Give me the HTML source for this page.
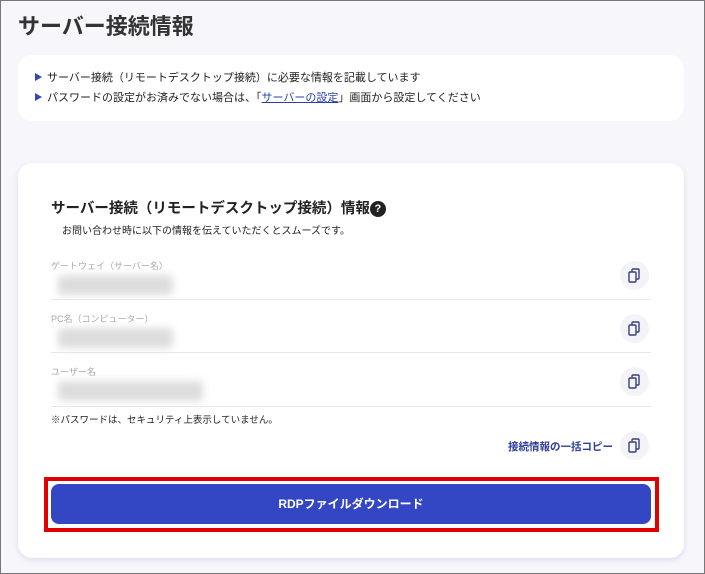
<!DOCTYPE html><html><head><meta charset="utf-8"><style>
*{box-sizing:border-box;margin:0;padding:0}
body{width:705px;height:574px;background:#f6f6fb;box-shadow:inset 0 0 0 1px #777;font-family:"Liberation Sans","Noto Sans CJK JP",sans-serif;color:#222;position:relative;overflow:hidden}
.a{position:absolute}
h1{position:absolute;left:18px;top:9px;font-size:22px;font-weight:bold;color:#333}
.card{position:absolute;left:18px;width:666px;background:#fff;border-radius:14px}
.li{position:absolute;left:17px;font-size:11px;color:#222;white-space:nowrap}
.li:before{content:"";display:inline-block;border-left:7px solid #3345c0;border-top:4px solid transparent;border-bottom:4px solid transparent;margin-right:5px}
.lbl{position:absolute;left:51px;font-size:9px;color:#aaa}
.blur{position:absolute;left:58px;height:20px;background:#ddd;filter:blur(4px);border-radius:4px}
.hr{position:absolute;left:51px;width:600px;height:1px;background:#e6e6ea}
.ic{position:absolute;left:620px;width:29px;height:29px;border-radius:50%;background:#f3f3f8}
.ic svg{position:absolute;left:8px;top:7px}
</style></head><body>
<h1>サーバー接続情報</h1>
<div class="card" style="top:55px;height:66px">
<div class="li" style="top:14px">サーバー接続（リモートデスクトップ接続）に必要な情報を記載しています</div>
<div class="li" style="top:34px">パスワードの設定がお済みでない場合は、「<span style="color:#2a3fa8;text-decoration:underline">サーバーの設定</span>」画面から設定してください</div>
</div>
<div class="card" style="top:163px;height:395px;box-shadow:0 2px 6px rgba(80,80,160,.15)"></div>
<div class="a" style="left:51px;top:197px;font-size:14.5px;font-weight:bold;color:#222;white-space:nowrap">サーバー接続（リモートデスクトップ接続）情報<span style="display:inline-block;width:16px;height:16px;border-radius:50%;background:#222;color:#fff;font-size:11px;text-align:center;line-height:16px;vertical-align:1px">?</span></div>
<div class="a" style="left:62px;top:222px;font-size:10px">お問い合わせ時に以下の情報を伝えていただくとスムーズです。</div>
<div class="lbl" style="top:259px">ゲートウェイ（サーバー名）</div><div class="blur" style="top:275px;width:115px"></div><div class="hr" style="top:299px"></div>
<div class="lbl" style="top:312px">PC名（コンピューター）</div><div class="blur" style="top:328px;width:115px"></div><div class="hr" style="top:352px"></div>
<div class="lbl" style="top:365px">ユーザー名</div><div class="blur" style="top:381px;width:145px"></div><div class="hr" style="top:406px"></div>
<div class="a" style="left:51px;top:412px;font-size:9.5px">※パスワードは、セキュリティ上表示していません。</div>
<div class="a" style="left:508px;top:439px;font-size:10.5px;font-weight:bold;color:#2f3f9a">接続情報の一括コピー</div>
<div class="ic" style="top:261px"><svg width="13" height="15" viewBox="0 0 13 15" fill="none" stroke="#3a3f7a" stroke-width="1.4"><rect x="1" y="4" width="7" height="10" rx="1"/><path d="M4 4V2a1 1 0 0 1 1-1h5a1 1 0 0 1 1 1v8a1 1 0 0 1-1 1H8"/></svg></div>
<div class="ic" style="top:314px"><svg width="13" height="15" viewBox="0 0 13 15" fill="none" stroke="#3a3f7a" stroke-width="1.4"><rect x="1" y="4" width="7" height="10" rx="1"/><path d="M4 4V2a1 1 0 0 1 1-1h5a1 1 0 0 1 1 1v8a1 1 0 0 1-1 1H8"/></svg></div>
<div class="ic" style="top:367px"><svg width="13" height="15" viewBox="0 0 13 15" fill="none" stroke="#3a3f7a" stroke-width="1.4"><rect x="1" y="4" width="7" height="10" rx="1"/><path d="M4 4V2a1 1 0 0 1 1-1h5a1 1 0 0 1 1 1v8a1 1 0 0 1-1 1H8"/></svg></div>
<div class="ic" style="top:431px"><svg width="13" height="15" viewBox="0 0 13 15" fill="none" stroke="#3a3f7a" stroke-width="1.4"><rect x="1" y="4" width="7" height="10" rx="1"/><path d="M4 4V2a1 1 0 0 1 1-1h5a1 1 0 0 1 1 1v8a1 1 0 0 1-1 1H8"/></svg></div>
<div class="a" style="left:44px;top:477px;width:615px;height:55px;border:4px solid #e00000"></div>
<div class="a" style="left:51px;top:484px;width:600px;height:40px;background:#3346c4;border-radius:8px;color:#fff;font-size:12px;font-weight:bold;text-align:center;line-height:40px">RDPファイルダウンロード</div>
</body></html>
